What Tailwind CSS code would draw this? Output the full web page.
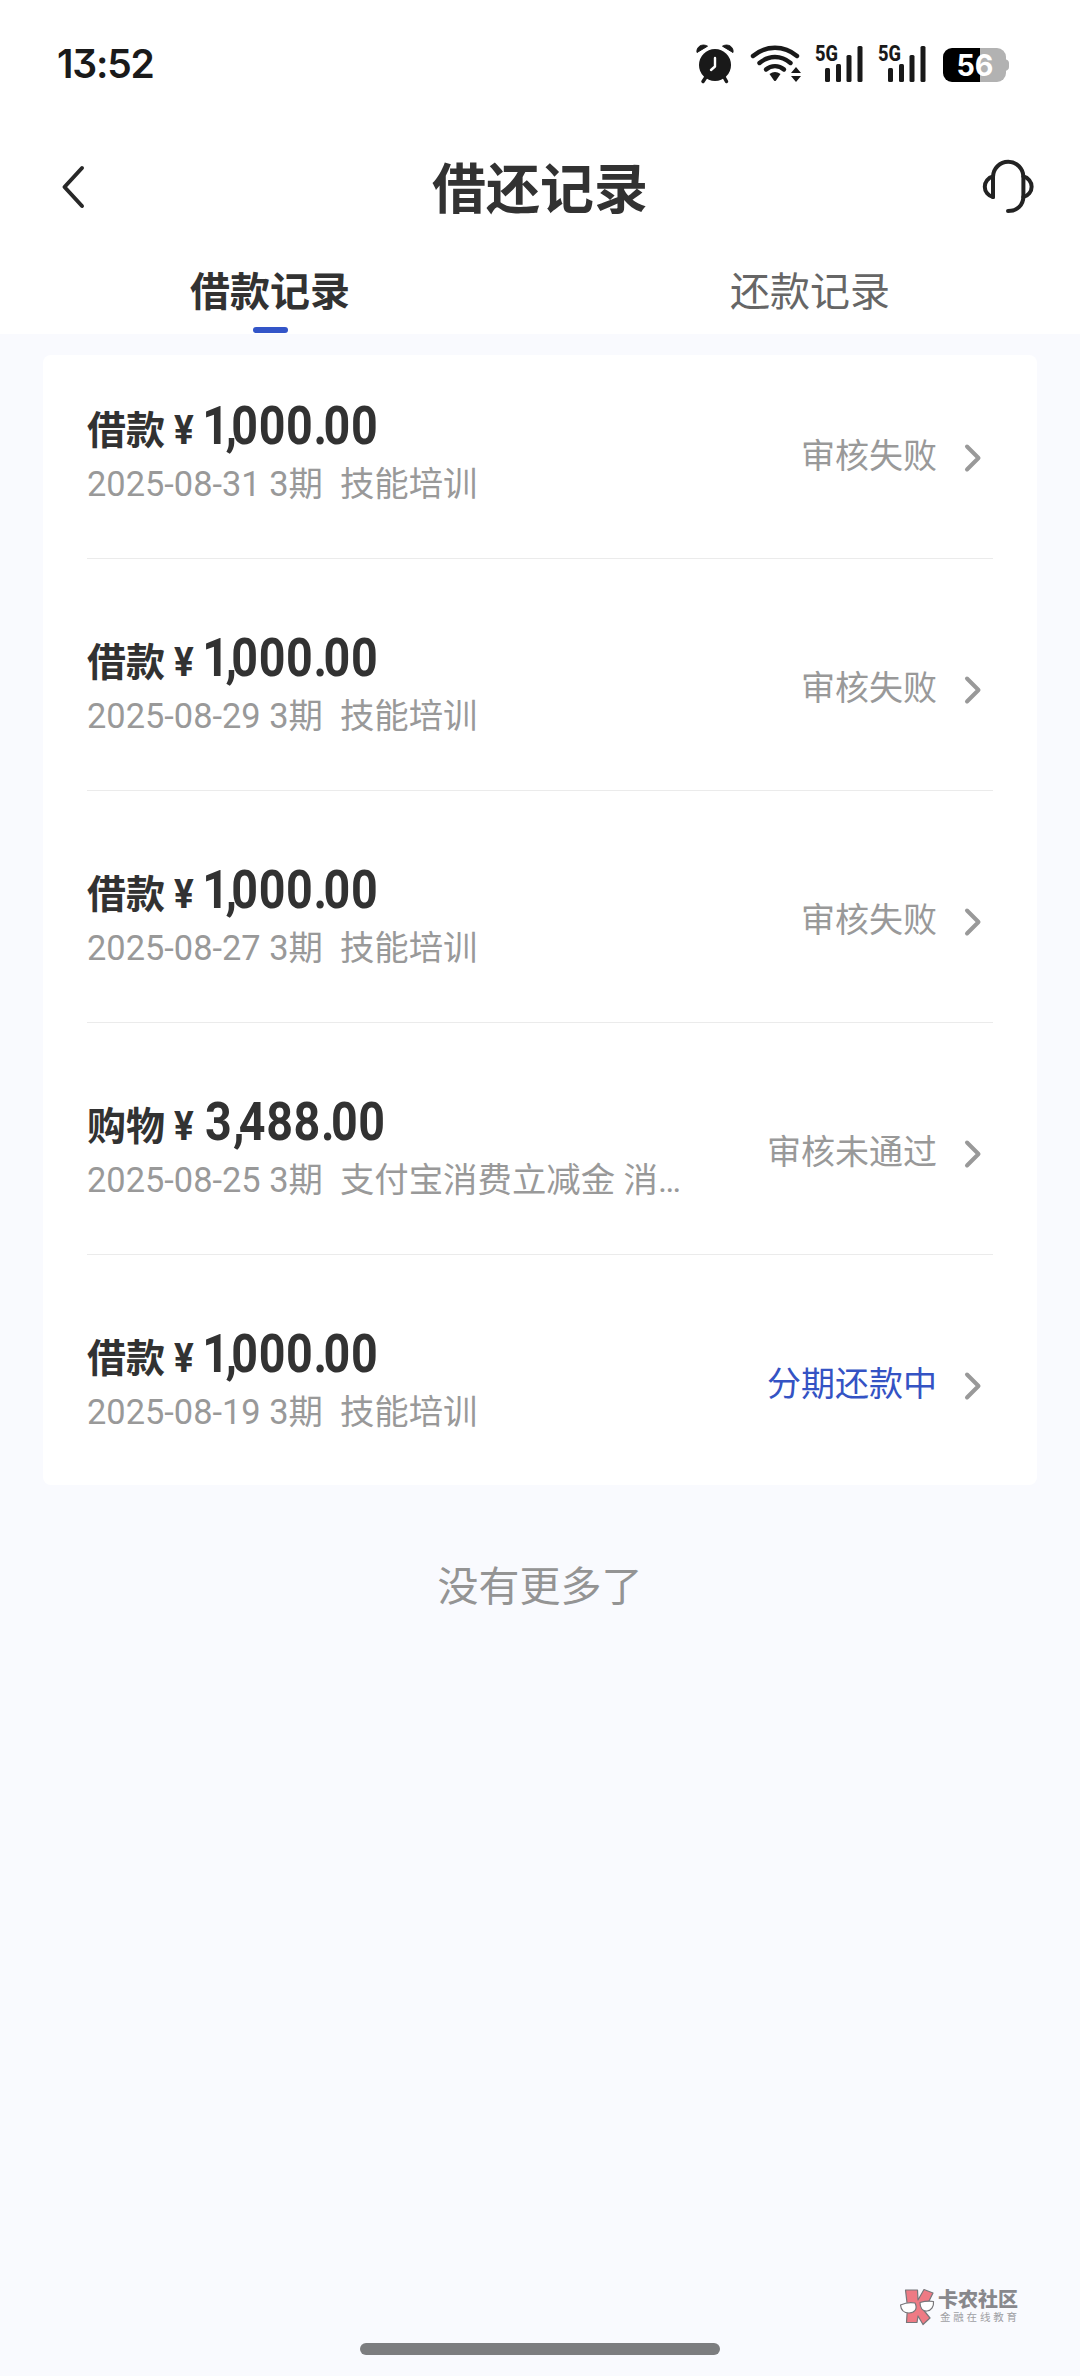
<!DOCTYPE html>
<html lang="zh-CN">
<head>
<meta charset="utf-8">
<title>借还记录</title>
<script src="https://cdn.jsdelivr.net/npm/@tailwindcss/browser@4"></script>
</head>
<body class="bg-[#f9fafe]">
<div class="flex h-[2376px] w-[1080px] flex-col overflow-hidden bg-[#f9fafe] font-['Roboto','Noto_Sans_CJK_SC',sans-serif] text-[#323232]">

  <header class="h-[334px] shrink-0 bg-white">
    <!-- status bar -->
    <div class="flex h-[126px] items-center justify-between pr-[60px] pl-[57px]">
      <span class="mt-px font-['Inter',sans-serif] text-[39px] leading-[50px] font-semibold tracking-[-1.200px] text-[#1a1a1a] [font-feature-settings:'cv09']">13:52</span>
      <svg class="mt-1 h-[70px] w-[340px] shrink-0" viewBox="0 0 340 70" fill="#191919">
        <!-- alarm -->
        <g>
          <path d="M17 22.500C16 17 22 13 27.500 16.200ZM53 22.500C54 17 48 13 42.500 16.200Z" stroke="#191919" stroke-width="1"/>
          <circle cx="35" cy="35" r="16"/>
          <path d="M26 47l-3 4.500M44 47l2.500 4.500" stroke="#191919" stroke-width="3.500" stroke-linecap="round"/>
          <path d="M35 28v8.500l-4 3.500" fill="none" stroke="#fff" stroke-width="2.400" stroke-linecap="round" stroke-linejoin="round"/>
        </g>
        <!-- wifi -->
        <g fill="none" stroke="#191919" stroke-width="4.400" stroke-linecap="round">
          <path d="M73 26C86 15 104 15 117 26"/>
          <path d="M79.500 33C89 25 101 25 110.500 33"/>
          <path d="M86 39.500C91 35 99 35 104 39.500"/>
        </g>
        <path d="M89.500 44Q95 40 100.500 44L96 50.500Q95 51.700 94 50.500Z"/>
        <path d="M116 37l5 6h-10ZM116 52l5-6h-10Z"/>
        <!-- cellular -->
        <text x="135" y="31" font-family="Roboto" font-size="21.500" font-weight="800" textLength="23" lengthAdjust="spacingAndGlyphs">5G</text>
        <rect x="145" y="38" width="5" height="14" rx="1.500"/><rect x="156" y="34" width="5" height="18" rx="1.500"/><rect x="166.500" y="25" width="5" height="27" rx="1.500"/><rect x="177.500" y="16" width="5" height="36" rx="1.500"/>
        <text x="198" y="31" font-family="Roboto" font-size="21.500" font-weight="800" textLength="23" lengthAdjust="spacingAndGlyphs">5G</text>
        <rect x="208" y="38" width="5" height="14" rx="1.500"/><rect x="219" y="34" width="5" height="18" rx="1.500"/><rect x="229.500" y="25" width="5" height="27" rx="1.500"/><rect x="240.500" y="16" width="5" height="36" rx="1.500"/>
        <!-- battery -->
        <path d="M300 18H317a9 9 0 0 1 9 9v16a9 9 0 0 1-9 9H300Z" fill="#b2b2b2"/>
        <path d="M325 29q4 1 4 4v4q0 3-4 4Z" fill="#b2b2b2"/>
        <path d="M300 18H272a9 9 0 0 0-9 9v16a9 9 0 0 0 9 9h28Z" fill="#000"/>
        <text x="276.500" y="46" fill="#fff" font-family="Inter" font-size="30" font-weight="700" textLength="37" lengthAdjust="spacingAndGlyphs">56</text>
      </svg>
    </div>

    <!-- title bar -->
    <div class="grid h-[122px] grid-cols-[1fr_auto_1fr] items-center pr-[43px] pl-[58px]">
      <svg class="h-[48px] w-[30px]" viewBox="0 0 30 48" fill="none" stroke="#282828" stroke-width="4" stroke-linecap="round" stroke-linejoin="round"><path d="M24 5L6.500 24 24 43"/></svg>
      <h1 class="mt-[7px] -ml-[15px] text-[54px] leading-[80px] font-bold">借还记录</h1>
      <svg class="mt-[2px] h-[58px] w-[58px] justify-self-end" viewBox="0 0 58 58" fill="none" stroke="#232323" stroke-width="4" stroke-linecap="round" stroke-linejoin="round"><path d="M14 38V18a15.200 15.200 0 0 1 30.400 0V37c0 9-6 15-15.400 15"/><path d="M14 17.500a10.500 10.500 0 0 0 0 20.500M44.400 17.500a10.500 10.500 0 0 1 0 20.500"/></svg>
    </div>

    <!-- tabs -->
    <nav class="grid h-[86px] grid-cols-2 text-[40px] leading-[60px]">
      <div class="flex flex-col items-center pt-[15px]"><span class="font-bold">借款记录</span><i class="mt-[4px] h-[6px] w-[35px] rounded-full bg-[#3355c8]"></i></div>
      <div class="flex flex-col items-center pt-[15px] text-[#666]">还款记录</div>
    </nav>
  </header>

  <main class="flex grow flex-col">
    <ul id="records" class="mx-[43px] mt-[21px] flex h-[1130px] flex-col rounded-lg bg-white px-[44px]"></ul>
    <p class="mt-[70px] text-center text-[41px] leading-[64px] text-[#949494]">没有更多了</p>
  </main>

  <footer class="flex flex-col">
    <div class="mb-[17px] flex items-center gap-[3px] self-end pr-[62px]">
      <svg class="h-[38px] w-[36px]" viewBox="0 0 36 38" stroke="#77767a" stroke-width="1.200" stroke-linejoin="round">
        <path d="M6.500 2H18.500L19 12 25 1.500 34 5 29 15 22.500 19.500 31 30 24 36.500 19 28 18 34.500H7.500L8.500 19Z" fill="#ee7a84"/>
        <path d="M1.500 17Q9 13.500 16 15c3 6-.5 10-6 10S2 22 1.500 17ZM21 14.500q7-2 13.500-1c.5 5-2 9-6.500 9.500s-7-3-7-8.500Z" fill="#fff"/>
      </svg>
      <div class="flex flex-col text-[#88888c]">
        <span class="text-[20px] leading-[21px] font-black">卡农社区</span>
        <span class="-mr-[3px] pl-[2px] text-[10.500px] leading-[13px] tracking-[2.800px] text-[#a0a0a4]">金融在线教育</span>
      </div>
    </div>
    <div class="mb-[21px] h-[12px] w-[360px] self-center rounded-full bg-[#7c7d7f]"></div>
  </footer>
</div>

<template id="row">
  <li class="flex h-[232px] shrink-0 items-end border-b border-[#ebebeb] pb-[41px] first:h-[204px] last:h-[231px] last:border-0">
    <div class="flex h-[122px] w-full items-center justify-between">
      <div class="-mt-[7px] flex flex-col">
        <div class="flex h-[60px] items-baseline font-bold">
          <span data-f="kind" class="w-[87px] text-[39px] leading-[60px]"></span>
          <span class="w-[31px] origin-left scale-x-[0.92] text-[40px] leading-[60px]">¥</span>
          <span class="origin-left scale-x-[0.88] text-[53px] leading-[60px] tracking-[0.700px] whitespace-nowrap"><span data-f="lead"></span><span class="tracking-[-6.500px]">,</span><span data-f="whole"></span><span class="tracking-[-4px]">.</span>00</span>
        </div>
        <div class="mt-[3px] w-[600px] truncate text-[34.400px] leading-[50px] whitespace-pre text-[#999]" data-f="info"></div>
      </div>
      <div class="flex items-center gap-[27px] pr-[11px]">
        <span data-f="status" class="text-[34px] leading-[50px]"></span>
        <svg class="mt-[3px] h-[30px] w-[18px]" viewBox="0 0 18 30" fill="none" stroke="#999" stroke-width="4" stroke-linecap="round" stroke-linejoin="round"><path d="M3 3.500L14.500 15 3 26.500"/></svg>
      </div>
    </div>
  </li>
</template>
<script>
const rows = [
  ['借款','1','000','2025-08-31 3期  技能培训','审核失败'],
  ['借款','1','000','2025-08-29 3期  技能培训','审核失败'],
  ['借款','1','000','2025-08-27 3期  技能培训','审核失败'],
  ['购物','3','488','2025-08-25 3期  支付宝消费立减金 消…','审核未通过'],
  ['借款','1','000','2025-08-19 3期  技能培训','分期还款中'],
];
const list = document.getElementById('records');
for (const [kind, lead, whole, info, status] of rows) {
  const n = document.getElementById('row').content.cloneNode(true);
  const f = k => n.querySelector(`[data-f=${k}]`);
  f('kind').textContent = kind;
  f('lead').textContent = lead;
  f('lead').className = lead === '1' ? 'tracking-[-4px] -ml-[3px]' : 'tracking-[1.500px]';
  f('whole').textContent = whole;
  f('info').textContent = info;
  f('status').textContent = status;
  f('status').classList.add(status === '分期还款中' ? 'text-[#3453c4]' : 'text-[#999]');
  list.append(n);
}
</script>
</body>
</html>
